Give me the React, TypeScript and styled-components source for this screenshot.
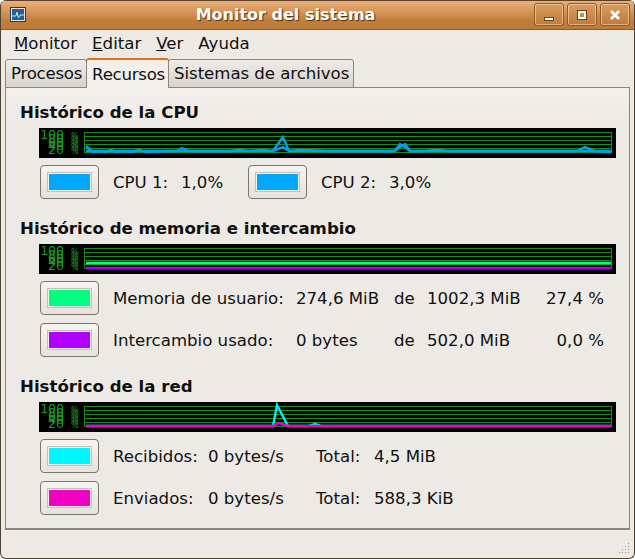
import styled, { createGlobalStyle } from 'styled-components';

const GlobalStyle = createGlobalStyle`
	html, body {
		margin: 0;
		padding: 0;
		background: #ffffff;
	}
	body {
		font-family: 'DejaVu Sans', sans-serif;
		font-size: 16.6px;
		color: #101010;
	}
`;

const GRID_LINES = [4, 8, 12, 16, 20, 24];
const AXIS_LABELS = ['100', '80', '60', '40', '20'];

type Series = { color: string; points: string };

const CHART_CPU: Series[] = [
	{
		color: '#00a2f0',
		points:
			'47,18 54,24 60,23 66,24 72,22 78,24 84,23 92,24 100,22 108,24 130,23 138,23 143,20 150,23 190,23 200,22 210,23 222,22 234,23 244,19 250,23 262,22 290,23 356,23 361,16 366,19 371,23 385,23 398,22 410,23 538,23 546,19 556,23 572,24',
	},
	{
		color: '#00a2f0',
		points: '47,23 100,23 186,23 234,23 244,9 250,23 300,23 356,23 362,18 366,16 371,23 400,23 538,23 556,23 572,23',
	},
];

const CHART_MEMORY: Series[] = [
	{ color: '#00ff80', points: '47,19 572,19' },
	{ color: '#b000ff', points: '47,24 572,24' },
];

const CHART_NETWORK: Series[] = [
	{ color: '#00f0f0', points: '47,24 234,24 238,3 249,24 270,24 276,22 282,24 572,24' },
	{ color: '#f000c0', points: '47,24 234,24 240,21 249,24 572,24' },
];

function Chart({ series }: { series: Series[] }) {
	return (
		<ChartBox>
			<svg width="577" height="30" viewBox="0 0 577 30">
				{AXIS_LABELS.map((label, i) => (
					<g key={label} fill="#1f9a2a" fontSize="12.5" fontFamily="'DejaVu Sans', sans-serif">
						<text x="25" y={11 + i * 3.75} textAnchor="end">
							{label}
						</text>
						<text x="32" y={11 + i * 3.75} fontSize="8">
							%
						</text>
					</g>
				))}
				<rect x="45.5" y="4.5" width="527" height="20" fill="none" stroke="#1f8a25" />
				{GRID_LINES.map((y) => (
					<line key={y} x1="45" x2="573" y1={y + 0.5} y2={y + 0.5} stroke="#1f8a25" />
				))}
				{series.map((s) => (
					<polyline key={s.color + s.points} points={s.points} fill="none" stroke={s.color} strokeWidth="2.4" />
				))}
			</svg>
		</ChartBox>
	);
}

function ColorButton({ color }: { color: string }) {
	return (
		<Swatch>
			<SwatchFill $color={color} />
		</Swatch>
	);
}

export default function App() {
	return (
		<>
			<GlobalStyle />
			<Window>
				<TitleBar>
					<AppIcon>
						<svg width="16" height="15" viewBox="0 0 16 15">
							<rect x="0.5" y="0.5" width="15" height="14" fill="#dfe6ee" stroke="#28384e" />
							<rect x="2" y="2" width="12" height="11" fill="#2c5c94" />
							<polyline points="2,9 6,9 7,5 8.5,11 10,8 14,8" fill="none" stroke="#b8f0c8" strokeWidth="1" />
						</svg>
					</AppIcon>
					<TitleText>Monitor del sistema</TitleText>
					<WindowButtons>
						<WindowButton>
							<svg width="10" height="12" viewBox="0 0 10 12">
								<rect x="0.5" y="8.5" width="9" height="3" fill="#fff" stroke="#6b3f14" strokeWidth="1" />
							</svg>
						</WindowButton>
						<WindowButton>
							<svg width="10" height="10" viewBox="0 0 10 10">
								<rect x="0.5" y="0.5" width="9" height="9" fill="none" stroke="#6b3f14" strokeWidth="1" />
								<rect x="2" y="2" width="6" height="6" fill="none" stroke="#fff" strokeWidth="2" />
							</svg>
						</WindowButton>
						<WindowButton>
							<svg width="10" height="10" viewBox="0 0 10 10">
								<path d="M1 1 L9 9 M9 1 L1 9" stroke="#fff" strokeWidth="2.6" />
							</svg>
						</WindowButton>
					</WindowButtons>
				</TitleBar>

				<MenuBar>
					<MenuItem>
						<u>M</u>onitor
					</MenuItem>
					<MenuItem>
						<u>E</u>ditar
					</MenuItem>
					<MenuItem>
						<u>V</u>er
					</MenuItem>
					<MenuItem>Ayuda</MenuItem>
				</MenuBar>

				<Tabs>
					<Tab $spacing={-0.25}>Procesos</Tab>
					<Tab $spacing={-0.25} $active>
						Recursos
					</Tab>
					<Tab $spacing={-0.05}>Sistemas de archivos</Tab>
				</Tabs>

				<Panel>
					<Section>
						<SectionTitle>Histórico de la CPU</SectionTitle>
						<Chart series={CHART_CPU} />
						<CpuRow>
							<ColorButton color="#00a8ff" />
							<span>CPU 1:</span>
							<span>1,0%</span>
							<ColorButton color="#00a8ff" />
							<span>CPU 2:</span>
							<span>3,0%</span>
						</CpuRow>
					</Section>

					<Section>
						<SectionTitle>Histórico de memoria e intercambio</SectionTitle>
						<Chart series={CHART_MEMORY} />
						<Rows>
							<MemoryRow>
								<ColorButton color="#00ff80" />
								<span>Memoria de usuario:</span>
								<span>274,6 MiB</span>
								<span>de</span>
								<span>1002,3 MiB</span>
								<Percent>27,4 %</Percent>
							</MemoryRow>
							<MemoryRow>
								<ColorButton color="#b000ff" />
								<span>Intercambio usado:</span>
								<span>0 bytes</span>
								<span>de</span>
								<span>502,0 MiB</span>
								<Percent>0,0 %</Percent>
							</MemoryRow>
						</Rows>
					</Section>

					<Section>
						<SectionTitle>Histórico de la red</SectionTitle>
						<Chart series={CHART_NETWORK} />
						<Rows>
							<NetworkRow>
								<ColorButton color="#00f6ff" />
								<span>Recibidos:</span>
								<span>0 bytes/s</span>
								<span>Total:</span>
								<span>4,5 MiB</span>
							</NetworkRow>
							<NetworkRow>
								<ColorButton color="#f000c0" />
								<span>Enviados:</span>
								<span>0 bytes/s</span>
								<span>Total:</span>
								<span>588,3 KiB</span>
							</NetworkRow>
						</Rows>
					</Section>
				</Panel>

				<StatusBar>
					<Grip>
						<svg width="12" height="12" viewBox="0 0 12 12" fill="#9a948a">
							<rect x="9" y="0" width="1" height="1" />
							<rect x="6" y="3" width="1" height="1" />
							<rect x="9" y="3" width="1" height="1" />
							<rect x="3" y="6" width="1" height="1" />
							<rect x="6" y="6" width="1" height="1" />
							<rect x="9" y="6" width="1" height="1" />
							<rect x="0" y="9" width="1" height="1" />
							<rect x="3" y="9" width="1" height="1" />
							<rect x="6" y="9" width="1" height="1" />
							<rect x="9" y="9" width="1" height="1" />
						</svg>
					</Grip>
				</StatusBar>
			</Window>
		</>
	);
}

const Window = styled.div`
	width: 635px;
	height: 559px;
	box-sizing: border-box;
	display: flex;
	flex-direction: column;
	background: #edeae5;
	border: 1px solid #4d4234;
	border-top: 0;
	border-radius: 6px;
	overflow: hidden;
`;

const TitleBar = styled.div`
	flex: none;
	height: 30px;
	box-sizing: border-box;
	position: relative;
	display: flex;
	align-items: center;
	padding: 0 4px 0 9px;
	background: linear-gradient(#e9b078 0%, #d9975a 35%, #c17f3c 70%, #bc7a38 100%);
	border-top: 1px solid #5a4128;
	border-bottom: 1px solid #8f5c28;
`;

const AppIcon = styled.div`
	display: flex;
	margin-top: -1px;
`;

const TitleText = styled.div`
	position: absolute;
	left: 0;
	right: 0;
	top: 3px;
	text-align: center;
	padding-right: 64px;
	font-size: 16px;
	font-weight: 700;
	line-height: 22px;
	color: #ffffff;
	text-shadow: 1px 1px 1px #4a3014;
	pointer-events: none;
`;

const WindowButtons = styled.div`
	margin-left: auto;
	display: flex;
	gap: 3px;
	margin-top: -1px;
`;

const WindowButton = styled.div`
	width: 30px;
	height: 23px;
	box-sizing: border-box;
	display: flex;
	align-items: center;
	justify-content: center;
	border: 1px solid #8f5c28;
	border-radius: 3px;
	box-shadow: inset 0 0 0 1px rgba(255, 225, 190, 0.55);
	background: linear-gradient(#dc9d60, #bd7b3a);
`;

const MenuBar = styled.div`
	flex: none;
	height: 28px;
	display: flex;
	align-items: center;
	padding-left: 13px;
	gap: 15px;
`;

const MenuItem = styled.div`
	line-height: 28px;
`;

const Tabs = styled.div`
	flex: none;
	height: 30px;
	display: flex;
	align-items: flex-end;
	padding-left: 5px;
	position: relative;
	z-index: 1;
	margin-bottom: -1px;
`;

const Tab = styled.div<{ $active?: boolean; $spacing: number }>`
	box-sizing: border-box;
	height: ${(p) => (p.$active ? '30px' : '29px')};
	display: flex;
	align-items: center;
	padding: 0 ${(p) => (p.$active ? '3px' : '4px')} 0 5px;
	letter-spacing: ${(p) => p.$spacing}px;
	border: 1px solid #8d8577;
	border-bottom: ${(p) => (p.$active ? '0' : '1px solid #8d8577')};
	border-top: ${(p) => (p.$active ? '2px solid #e0701c' : '1px solid #8d8577')};
	border-radius: 3px 3px 0 0;
	background: ${(p) => (p.$active ? '#f3f0ec' : 'linear-gradient(#efebe7, #d8d3cb)')};
	margin-left: -1px;
`;

const Panel = styled.div`
	flex: none;
	height: 443px;
	box-sizing: border-box;
	margin: 0 4px;
	padding: 13px 13px 0 14px;
	display: flex;
	flex-direction: column;
	gap: 18px;
	border: 1px solid #8d8577;
	border-bottom-width: 2px;
	background: linear-gradient(#f3f0ec, #edeae5 40px);
`;

const Section = styled.div`
	display: flex;
	flex-direction: column;
`;

const SectionTitle = styled.h2`
	margin: 0 0 4px;
	padding-top: 1px;
	font-size: 16.6px;
	line-height: 22px;
	font-weight: 700;
`;

const ChartBox = styled.div`
	display: flex;
	margin-left: 19px;
	width: 577px;
	height: 30px;
	background: #000000;
`;

const Swatch = styled.div`
	width: 59px;
	height: 34px;
	box-sizing: border-box;
	padding: 6px;
	border: 1px solid #7c7566;
	border-radius: 4px;
	background: linear-gradient(#f6f4f1, #e6e2dc);
`;

const SwatchFill = styled.div<{ $color: string }>`
	height: 100%;
	box-sizing: border-box;
	background: ${(p) => p.$color};
	border: 1px solid #c4c0b8;
	box-shadow: inset 0 0 0 1px #f6f4f1;
`;

const CpuRow = styled.div`
	display: grid;
	grid-template-columns: 73px 68px 67px 73px 68px auto;
	align-items: center;
	justify-content: start;
	margin: 7px 0 0 20px;
`;

const Rows = styled.div`
	display: flex;
	flex-direction: column;
	gap: 8px;
	margin: 7px 0 0 20px;
`;

const MemoryRow = styled.div`
	display: grid;
	grid-template-columns: 73px 183px 98px 33px 110px 67px;
	align-items: center;
	justify-content: start;
`;

const Percent = styled.span`
	text-align: right;
`;

const NetworkRow = styled.div`
	display: grid;
	grid-template-columns: 73px 95px 108px 58px auto;
	align-items: center;
	justify-content: start;
`;

const StatusBar = styled.div`
	flex: 1;
	display: flex;
	justify-content: flex-end;
	align-items: flex-end;
	padding: 0 3px 3px 0;
`;

const Grip = styled.div`
	display: flex;
`;
